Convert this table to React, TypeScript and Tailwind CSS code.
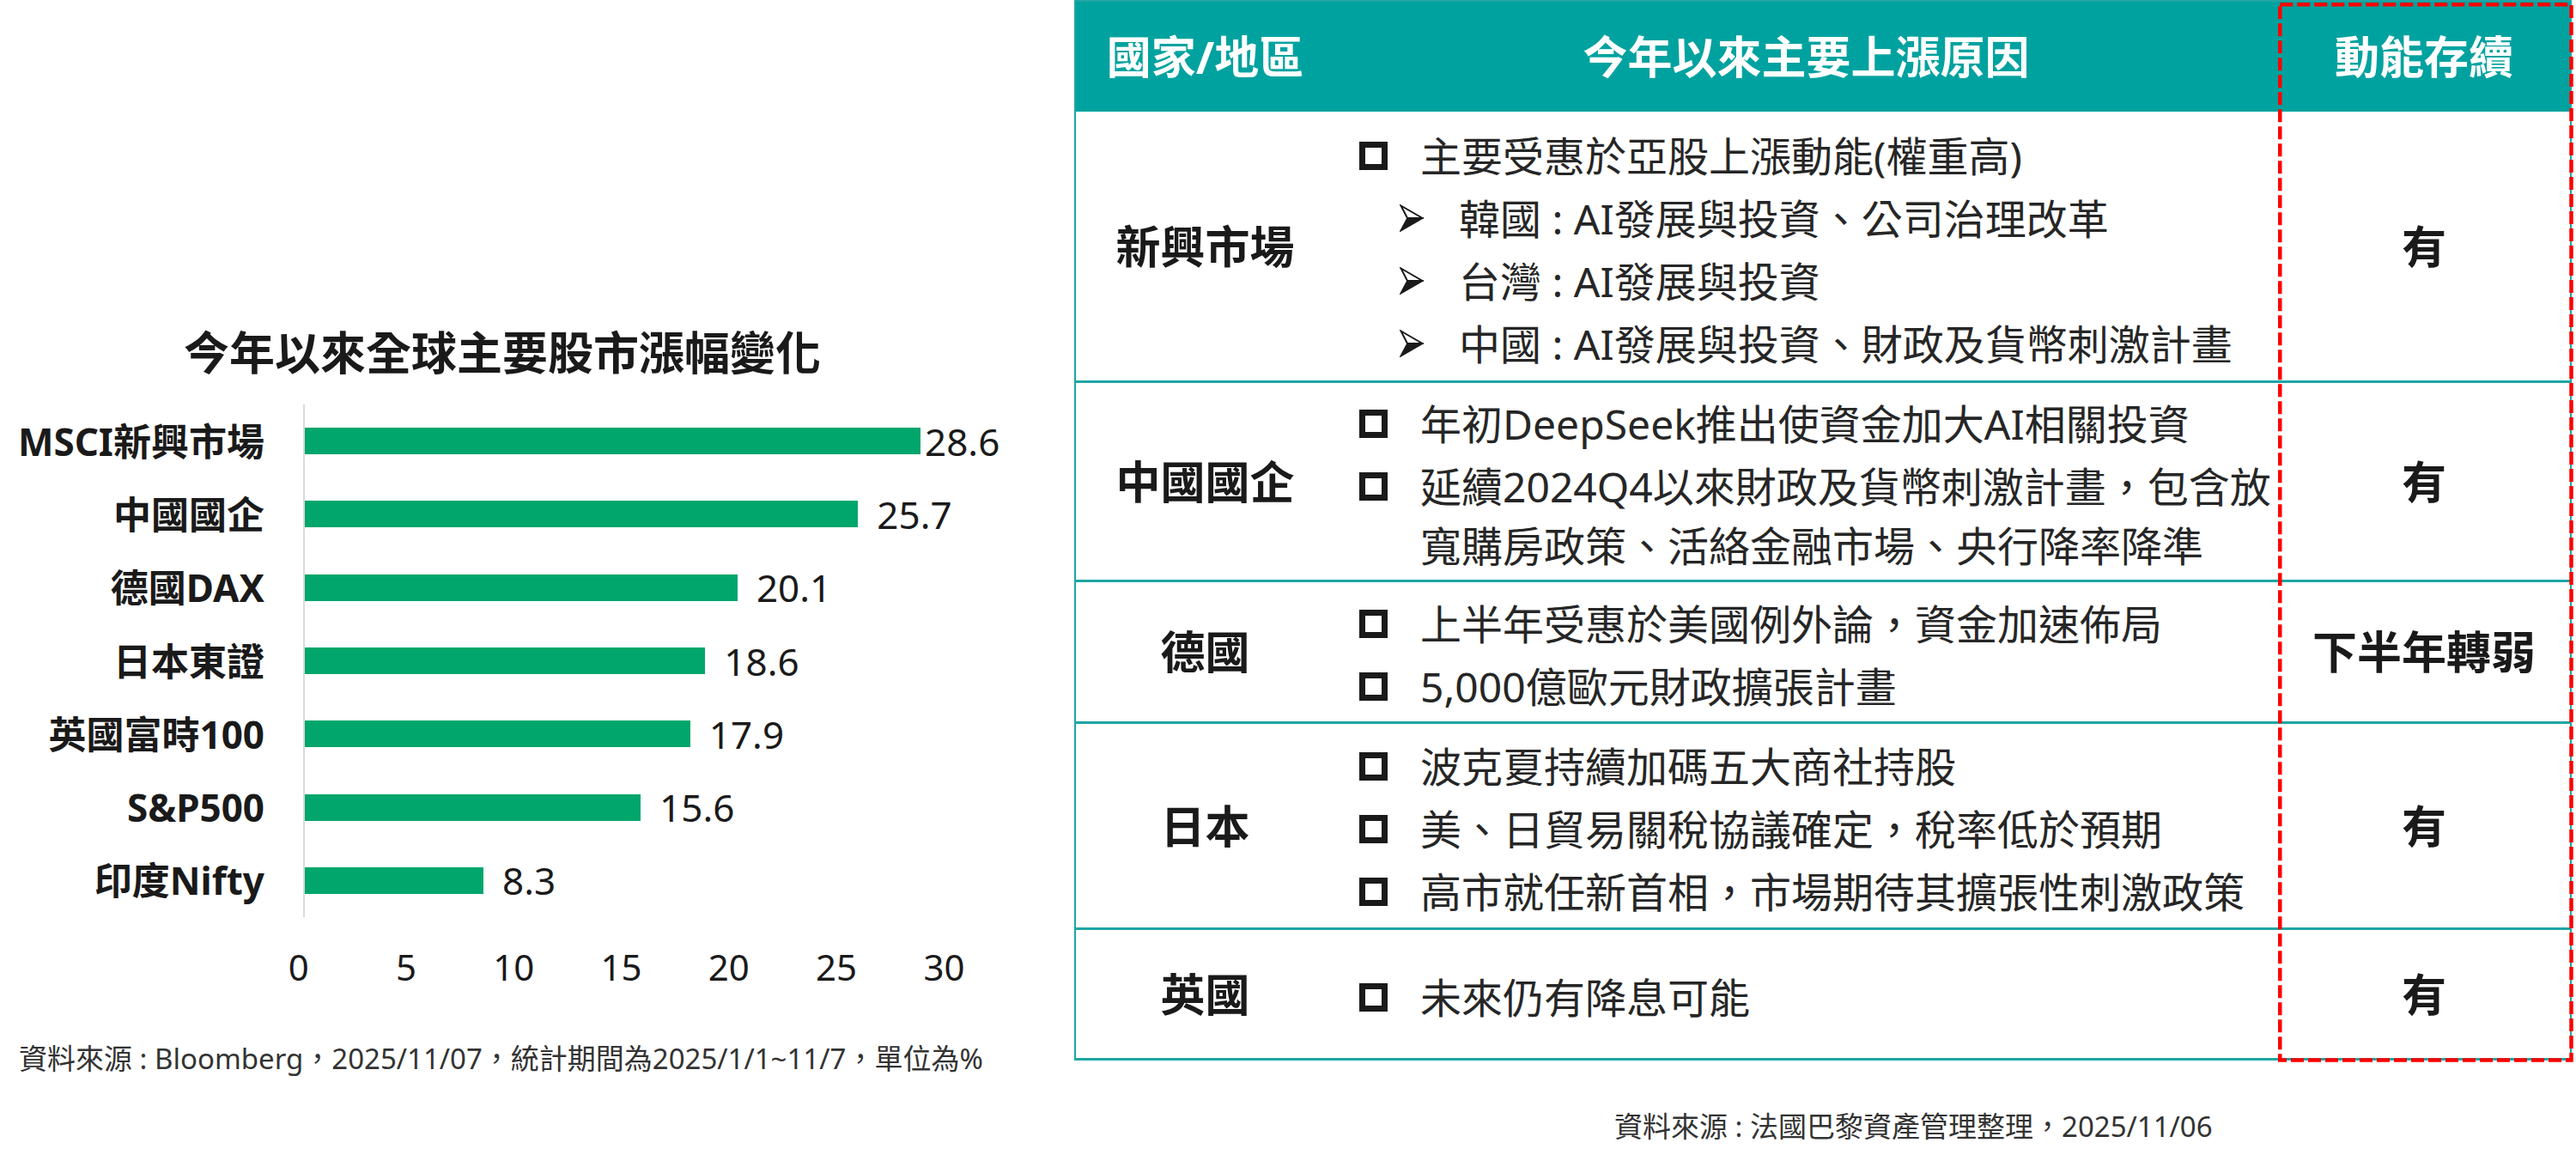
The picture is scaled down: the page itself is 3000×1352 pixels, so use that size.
const bars = [
  { label: "MSCI新興市場", value: 28.6, gap: "ml-[5px]" },
  { label: "中國國企", value: 25.7, gap: "ml-[22px]" },
  { label: "德國DAX", value: 20.1, gap: "ml-[22px]" },
  { label: "日本東證", value: 18.6, gap: "ml-[22px]" },
  { label: "英國富時100", value: 17.9, gap: "ml-[22px]" },
  { label: "S&P500", value: 15.6, gap: "ml-[22px]" },
  { label: "印度Nifty", value: 8.3, gap: "ml-[22px]" },
];

const ticks = [0, 5, 10, 15, 20, 25, 30];
const PX_PER_UNIT = 25.07;

type Item = { sub?: boolean; lines: string[] };
type Row = { region: string; h: string; momentum: string; items: Item[] };

const rows: Row[] = [
  {
    region: "新興市場",
    h: "h-[316px]",
    momentum: "有",
    items: [
      { lines: ["主要受惠於亞股上漲動能(權重高)"] },
      { sub: true, lines: ["韓國 : AI發展與投資、公司治理改革"] },
      { sub: true, lines: ["台灣 : AI發展與投資"] },
      { sub: true, lines: ["中國 : AI發展與投資、財政及貨幣刺激計畫"] },
    ],
  },
  {
    region: "中國國企",
    h: "h-[232px]",
    momentum: "有",
    items: [
      { lines: ["年初DeepSeek推出使資金加大AI相關投資"] },
      { lines: ["延續2024Q4以來財政及貨幣刺激計畫，包含放", "寬購房政策、活絡金融市場、央行降率降準"] },
    ],
  },
  {
    region: "德國",
    h: "h-[165px]",
    momentum: "下半年轉弱",
    items: [
      { lines: ["上半年受惠於美國例外論，資金加速佈局"] },
      { lines: ["5,000億歐元財政擴張計畫"] },
    ],
  },
  {
    region: "日本",
    h: "h-[240px]",
    momentum: "有",
    items: [
      { lines: ["波克夏持續加碼五大商社持股"] },
      { lines: ["美、日貿易關稅協議確定，稅率低於預期"] },
      { lines: ["高市就任新首相，市場期待其擴張性刺激政策"] },
    ],
  },
  {
    region: "英國",
    h: "h-[152px]",
    momentum: "有",
    items: [{ lines: ["未來仍有降息可能"] }],
  },
];

const Arrow = () => (
  <svg width="28" height="32" viewBox="0 0 28 32">
    <polygon points="1.5,1.5 26.5,16 9,16" fill="#fff" stroke="#1a1a1a" strokeWidth="2" strokeLinejoin="miter" />
    <polygon points="9,16 27,16 1,31" fill="#1a1a1a" stroke="#1a1a1a" strokeWidth="1.5" />
  </svg>
);

const Square = () => <div className="w-[33px] h-[33px] border-[7px] border-[#1a1a1a] bg-white" />;

const BarChart = () => (
  <div className="w-[1251px] shrink-0 flex flex-col text-[#1a1a1a]">
    <div className="mt-[381px] w-[1170px] h-[60px] leading-[60px] text-center text-[53px] font-bold">
      今年以來全球主要股市漲幅變化
    </div>

    <div className="mt-[30px] flex">
      <div className="w-[308px] flex flex-col">
        {bars.map((b) => (
          <div key={b.label} className="h-[85.3px] flex items-center justify-end text-[44px] font-bold whitespace-nowrap">
            {b.label}
          </div>
        ))}
      </div>
      <div className="w-[45px]" />
      <div className="flex flex-col border-l-2 border-[#d9d9d9]">
        {bars.map((b) => (
          <div key={b.label} className="h-[85.3px] flex items-center">
            <div className="h-[31px] bg-[#00a66b]" style={{ width: `${b.value * PX_PER_UNIT}px` }} />
            <span className={`${b.gap} text-[44px] leading-none`}>{b.value}</span>
          </div>
        ))}
      </div>
    </div>

    <div className="mt-[32px] h-[50px] flex items-center pl-[285px] text-[42px]">
      {ticks.map((t) => (
        <div key={t} className="w-[125.3px] text-center">
          {t}
        </div>
      ))}
    </div>

    <div className="mt-[63px] pl-[22px] h-[40px] leading-[40px] text-[33px] text-[#333] whitespace-nowrap">
      資料來源 : Bloomberg，2025/11/07，統計期間為2025/1/1~11/7，單位為%
    </div>
  </div>
);

const ReasonTable = () => (
  <div className="flex flex-col">
    <div className="relative w-[1744px] border-2 border-b-0 border-[#1fa5a5] flex flex-col">
      <div className="h-[128px] bg-[#00a29f] flex text-white text-[52px] font-bold">
        <div className="w-[301px] flex items-center justify-center">國家/地區</div>
        <div className="w-[1099px] flex items-center justify-center">今年以來主要上漲原因</div>
        <div className="flex-1 flex items-center justify-center">動能存續</div>
      </div>

      {rows.map((r) => (
        <div key={r.region} className={`${r.h} flex border-b-[3px] border-[#1fa5a5]`}>
          <div className="w-[301px] flex items-center justify-center text-[52px] font-bold">{r.region}</div>
          <div className="w-[1099px] flex flex-col justify-center gap-[4px] pt-[8px] text-[48px] text-[#262626]">
            {r.items.map((it, i) => (
              <div key={i} className={`flex items-start ${it.sub ? "pl-[76px]" : "pl-[29px]"}`}>
                <div className={`h-[69px] flex items-center ${it.sub ? "w-[28px] mr-[41px]" : "w-[33px] mr-[38px]"}`}>
                  {it.sub ? <Arrow /> : <Square />}
                </div>
                <div className="flex flex-col">
                  {it.lines.map((l) => (
                    <div key={l} className="leading-[69px] whitespace-nowrap">
                      {l}
                    </div>
                  ))}
                </div>
              </div>
            ))}
          </div>
          <div className="flex-1 flex items-center justify-center text-[52px] font-bold">{r.momentum}</div>
        </div>
      ))}

      {/* red dashed highlight around the momentum column */}
      <svg className="absolute left-[1400px] top-[1px] w-[344px] h-[1234px]" viewBox="0 0 344 1234">
        <rect x="2.25" y="2.25" width="339.25" height="1229.25" fill="none" stroke="#ff0000" strokeWidth="4.5" strokeDasharray="15 5" />
      </svg>
    </div>

    <div className="mt-[57px] pl-[629px] h-[40px] leading-[40px] text-[33px] text-[#333] whitespace-nowrap">
      資料來源 : 法國巴黎資產管理整理，2025/11/06
    </div>
  </div>
);

export default function App() {
  return (
    <div className="w-[3000px] h-[1352px] bg-white flex text-[#1a1a1a] font-['Noto_Sans','Noto_Sans_CJK_TC',sans-serif]">
      <BarChart />
      <ReasonTable />
    </div>
  );
}
